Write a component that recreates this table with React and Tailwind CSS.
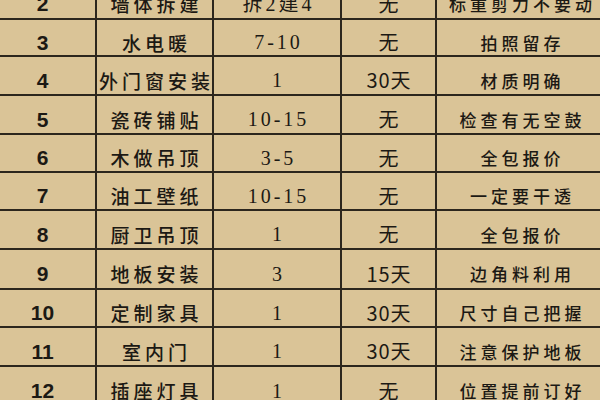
import React from "react";

const rows = [
  { n: "2", a: "墙体拆建", b: "拆2建4", c: "无", d: "标重剪力不要动", h: "h-[40px] mt-[-20px]" },
  { n: "3", a: "水电暖", b: "7-10", c: "无", d: "拍照留存", h: "h-[37px]" },
  { n: "4", a: "外门窗安装", b: "1", c: "30天", d: "材质明确", h: "h-[39px]" },
  { n: "5", a: "瓷砖铺贴", b: "10-15", c: "无", d: "检查有无空鼓", h: "h-[39px]" },
  { n: "6", a: "木做吊顶", b: "3-5", c: "无", d: "全包报价", h: "h-[38px]" },
  { n: "7", a: "油工壁纸", b: "10-15", c: "无", d: "一定要干透", h: "h-[38px]" },
  { n: "8", a: "厨卫吊顶", b: "1", c: "无", d: "全包报价", h: "h-[39px]" },
  { n: "9", a: "地板安装", b: "3", c: "15天", d: "边角料利用", h: "h-[40px]" },
  { n: "10", a: "定制家具", b: "1", c: "30天", d: "尺寸自己把握", h: "h-[38px]" },
  { n: "11", a: "室内门", b: "1", c: "30天", d: "注意保护地板", h: "h-[39px]" },
  { n: "12", a: "插座灯具", b: "1", c: "无", d: "位置提前订好", h: "h-[40px]" },
];

const cjk = "font-['Noto_Sans_CJK_SC',sans-serif]";

export default function App() {
  return (
    <div className="w-[600px] h-[400px] overflow-hidden bg-[#dac497] text-[#1c1914]">
      <div className="ml-[-12px] w-[620px] flex flex-col">
        {rows.map((r) => (
          <div
            key={r.n}
            className={`flex shrink-0 border-b-2 border-[#2c261d] ${r.h}`}
          >
            <div className="w-[109px] shrink-0 border-r-2 border-[#2c261d] flex items-center justify-center pt-[9px] pl-[2px]">
              <span className="font-['Liberation_Sans',sans-serif] font-bold text-[21px] leading-none">
                {r.n}
              </span>
            </div>
            <div className="w-[117px] shrink-0 border-r-2 border-[#2c261d] flex items-center justify-center pt-[9px] whitespace-nowrap">
              <span className={`${cjk} font-medium text-[19px] leading-none tracking-[4px] mr-[-4px]`}>
                {r.a}
              </span>
            </div>
            <div className="w-[128px] shrink-0 border-r-2 border-[#2c261d] flex items-center justify-center pt-[9px] whitespace-nowrap">
              <span className="font-['Liberation_Serif','Noto_Sans_CJK_SC',serif] text-[20px] leading-none tracking-[3px] mr-[-3px]">
                {r.b}
              </span>
            </div>
            <div className="w-[95px] shrink-0 border-r-2 border-[#2c261d] flex items-center justify-center pt-[9px] whitespace-nowrap">
              <span className={`${cjk} font-normal text-[20px] leading-none tracking-[1px] mr-[-1px]`}>
                {r.c}
              </span>
            </div>
            <div className="flex-1 flex items-center justify-center pt-[9px] pr-[4px] whitespace-nowrap">
              <span className={`${cjk} font-medium text-[17px] leading-none tracking-[4px] mr-[-4px]`}>
                {r.d}
              </span>
            </div>
          </div>
        ))}
      </div>
    </div>
  );
}
